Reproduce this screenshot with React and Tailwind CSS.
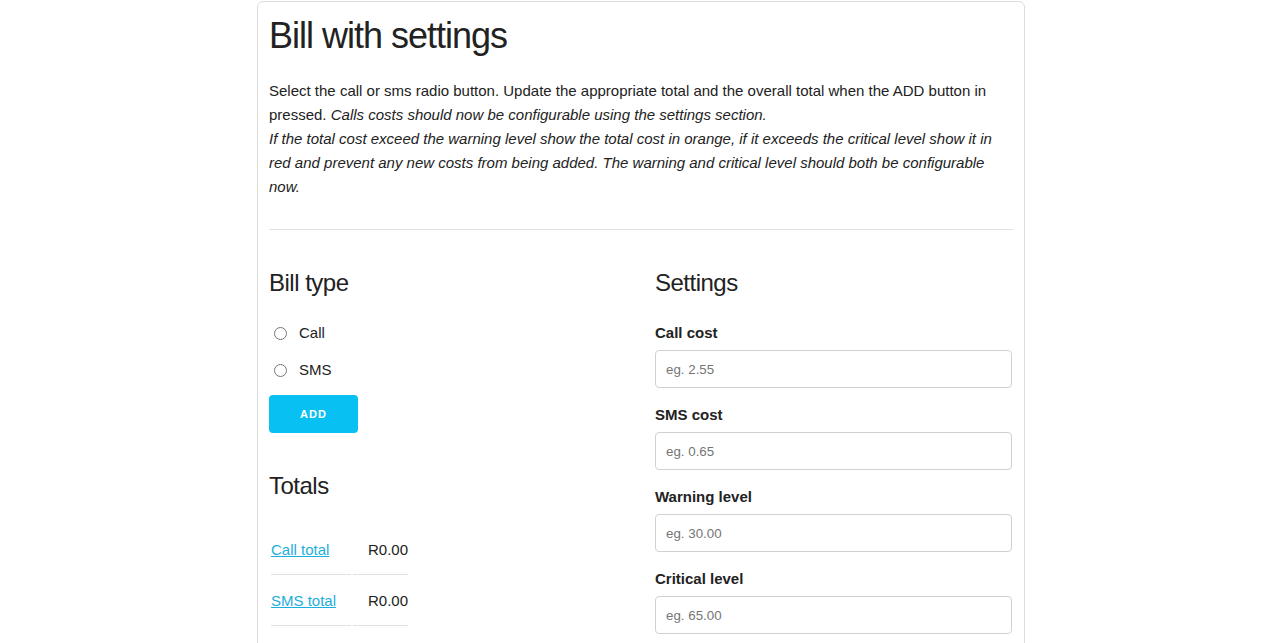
import React from 'react';

const fields = [
    { label: 'Call cost', placeholder: 'eg. 2.55' },
    { label: 'SMS cost', placeholder: 'eg. 0.65' },
    { label: 'Warning level', placeholder: 'eg. 30.00' },
    { label: 'Critical level', placeholder: 'eg. 65.00' },
];

const App = () => {
    return (
        <div className="min-h-screen bg-white text-[#222] text-[15px] leading-6" style={{ fontFamily: '"Liberation Sans", Arial, sans-serif' }}>
            <div className="ml-[257px] mt-[1px] w-[768px] border border-[#dcdcdc] rounded-t-md px-[11px] pb-6">
                <h1 className="text-[36px] leading-[1.2] tracking-[-1px] mt-[12px] mb-[22px]">Bill with settings</h1>

                <p className="mb-0">
                    Select the call or sms radio button. Update the appropriate total and the overall total when the ADD button in pressed. <em>Calls costs should now be configurable using the settings section.</em>
                    <br />
                    <em>If the total cost exceed the warning level show the total cost in orange, if it exceeds the critical level show it in red and prevent any new costs from being added. The warning and critical level should both be configurable now.</em>
                </p>

                <hr className="mt-[30px] mb-[37px] border-0 border-t border-[#e1e1e1]" />

                <div className="flex gap-[30px]">
                    {/* Bill type + totals */}
                    <div className="w-[356px]">
                        <h4 className="text-2xl leading-[32px] tracking-[-0.5px] mb-[22px]">Bill type</h4>

                        <label className="flex items-center h-6 mb-[13px]">
                            <input type="radio" name="billType" className="ml-[5px] mr-[12px] w-[13px] h-[13px]" />
                            <span>Call</span>
                        </label>
                        <label className="flex items-center h-6 mb-[13px]">
                            <input type="radio" name="billType" className="ml-[5px] mr-[12px] w-[13px] h-[13px]" />
                            <span>SMS</span>
                        </label>

                        <button className="w-[89px] h-[38px] rounded bg-[#08c1f2] text-white text-[11px] font-bold tracking-[1px] uppercase">
                            Add
                        </button>

                        <h4 className="text-2xl leading-[32px] tracking-[-0.5px] mt-[37px] mb-[22px]">Totals</h4>

                        <table className="border-separate border-spacing-[2px]">
                            <tbody>
                                <tr>
                                    <td className="py-3 pr-[15px] border-b border-[#e1e1e1]">
                                        <a href="#" className="text-[#1eaedb] underline">Call total</a>
                                    </td>
                                    <td className="py-3 pl-[15px] border-b border-[#e1e1e1]">R0.00</td>
                                </tr>
                                <tr>
                                    <td className="py-3 pr-[15px] border-b border-[#e1e1e1]">
                                        <a href="#" className="text-[#1eaedb] underline">SMS total</a>
                                    </td>
                                    <td className="py-3 pl-[15px] border-b border-[#e1e1e1]">R0.00</td>
                                </tr>
                            </tbody>
                        </table>
                    </div>

                    {/* Settings */}
                    <div className="w-[357px]">
                        <h4 className="text-2xl leading-[32px] tracking-[-0.5px] mb-[22px]">Settings</h4>
                        {fields.map((f) => (
                            <div key={f.label}>
                                <label className="block font-bold h-6 mb-[5px]">{f.label}</label>
                                <input
                                    type="text"
                                    placeholder={f.placeholder}
                                    className="block w-full h-[38px] mb-[15px] px-[10px] border border-[#d1d1d1] rounded text-[13.33px] placeholder:text-[#757575] bg-white"
                                />
                            </div>
                        ))}
                    </div>
                </div>
            </div>
        </div>
    );
};

export default App;
